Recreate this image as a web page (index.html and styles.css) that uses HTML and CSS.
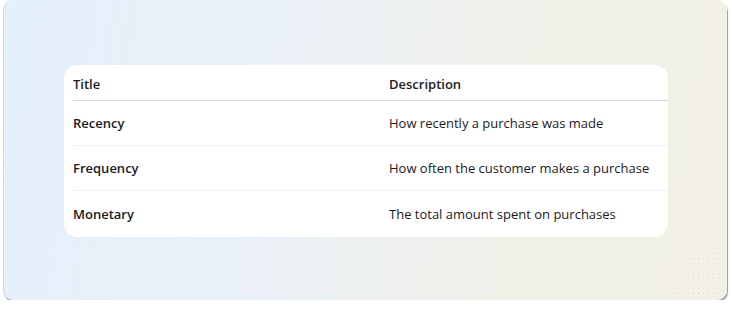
FILE: index.html
```html
<!DOCTYPE html>
<html lang="en">
<head>
  <meta charset="UTF-8" />
  <meta name="viewport" content="width=device-width, initial-scale=1.0"/>
  <title>RFM Metrics</title>
  <link rel="stylesheet" href="styles.css">
</head>
<body>

  <!-- PANEL -->
  <div class="panel">
    <div class="puntos"></div>

    <div class="tabla">
      <div class="fila cabecera">
        <div class="col-titulo">Title</div>
        <div class="col-desc">Description</div>
      </div>
      <div class="fila">
        <div class="col-titulo">Recency</div>
        <div class="col-desc">How recently a purchase was made</div>
      </div>
      <div class="fila">
        <div class="col-titulo">Frequency</div>
        <div class="col-desc">How often the customer makes a purchase</div>
      </div>
      <div class="fila ultima">
        <div class="col-titulo">Monetary</div>
        <div class="col-desc">The total amount spent on purchases</div>
      </div>
    </div>
  </div>

</body>
</html>
```

FILE: styles.css
```css
body {
  margin: 0;
  font-family: 'Open Sans', 'Noto Sans', sans-serif;
  background-color: #ffffff;
  color: #1b1b1f;
}

.panel {
  position: relative;
  margin: 0 5px 0 3px;
  height: 300px;
  box-sizing: border-box;
  padding: 65px 60px 0 60px;
  border-radius: 10px;
  background: linear-gradient(100deg, #e4f0fc 0%, #ebf1f6 40%, #f1f1ea 70%, #f3f1e5 100%);
  border-left: 1px solid #d4d6d8;
  box-shadow: 1px 2px 1px rgba(0, 0, 0, 0.4);
}

/* trama de puntos en la esquina */
.puntos {
  position: absolute;
  right: 6px;
  bottom: 4px;
  width: 60px;
  height: 80px;
  background-image: radial-gradient(circle, rgba(170, 170, 160, 0.3) 0.6px, transparent 1px);
  background-size: 5px 5px;
  -webkit-mask-image: radial-gradient(circle at 100% 100%, #000 25%, transparent 75%);
  mask-image: radial-gradient(circle at 100% 100%, #000 25%, transparent 75%);
}

.tabla {
  background-color: #ffffff;
  border-radius: 14px;
  width: 604px;
  font-size: 13px;
}

.fila {
  display: flex;
  align-items: center;
  box-sizing: border-box;
  height: 45px;
  margin-left: 9px;
  border-bottom: 1px solid #f0f0f0;
}

.cabecera {
  height: 36px;
  padding-top: 2px;
  border-bottom: 1px solid #d8d8d8;
  font-weight: 600;
}

.ultima {
  border-bottom: none;
  height: 46px;
}

.col-titulo {
  width: 316px;
  font-weight: 600;
}

.col-desc {
  flex: 1;
}
```
